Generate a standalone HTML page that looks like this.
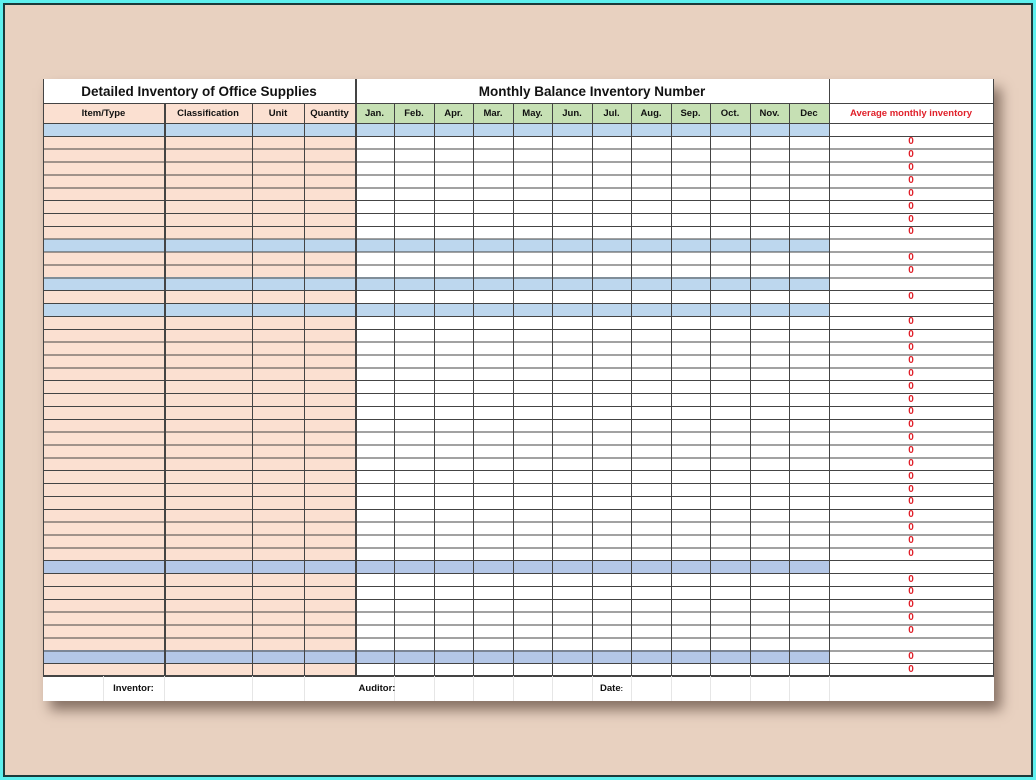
<!DOCTYPE html>
<html><head><meta charset="utf-8"><style>
*{margin:0;padding:0;box-sizing:border-box}
body{width:1036px;height:780px;overflow:hidden;background:#5ef0ee;font-family:"Liberation Sans",Arial,sans-serif}
#frame{position:absolute;left:3px;top:3px;width:1030px;height:774px;background:#e8d1c0;border:2px solid #1b3a3a}
#sheet{position:absolute;left:43px;top:79px;width:951px;height:622px;background:#fff;box-shadow:7px 9px 12px rgba(70,50,40,.6)}
.a{position:absolute}
.v{position:absolute;width:1px;background:#444}
.t{position:absolute;font-weight:bold;text-align:center;color:#111}
.h{font-size:9.5px;top:29px}
</style></head><body>
<div id="frame"></div>
<div id="sheet">
 <div class="t" style="left:0;top:5px;width:312px;font-size:13.5px">Detailed Inventory of Office Supplies</div>
 <div class="t" style="left:312px;top:5px;width:474px;font-size:13.5px">Monthly Balance Inventory Number</div>
 <div class="a" style="left:0;top:24px;width:312px;height:20px;background:#fbe0d1"></div>
 <div class="a" style="left:312px;top:24px;width:474px;height:20px;background:#c6e0b4"></div>
 <div class="a" style="left:0;top:44px;width:312px;height:553px;background:#fbe0d1"></div>
 <div class="a" style="left:0;top:44px;width:786px;height:13px;background:#bdd7ee"></div>
 <div class="a" style="left:0;top:159.7px;width:786px;height:13px;background:#bdd7ee"></div>
 <div class="a" style="left:0;top:198.3px;width:786px;height:13px;background:#bdd7ee"></div>
 <div class="a" style="left:0;top:224px;width:786px;height:13px;background:#bdd7ee"></div>
 <div class="a" style="left:0;top:481.2px;width:786px;height:13px;background:#b4c7e7"></div>
 <div class="a" style="left:0;top:571.3px;width:786px;height:13px;background:#b4c7e7"></div>
 <div class="a" style="left:0;top:24px;width:951px;height:1px;background:#444"></div>
 <div class="a" style="left:0;top:44px;width:951px;height:554px;background:repeating-linear-gradient(to bottom,#444 0,#444 1px,transparent 1px,transparent 12.86px)"></div>
 <div class="a" style="left:0;top:596px;width:951px;height:1px;background:#444"></div>
 <div class="v" style="left:0;top:0;height:597px"></div>
 <div class="v" style="left:121px;top:24px;height:573px;width:2px"></div>
 <div class="v" style="left:209px;top:24px;height:573px"></div>
 <div class="v" style="left:261px;top:24px;height:573px"></div>
 <div class="v" style="left:312px;top:0;height:597px;width:2px"></div>
 <div class="v" style="left:351px;top:24px;height:573px"></div>
 <div class="v" style="left:391px;top:24px;height:573px"></div>
 <div class="v" style="left:430px;top:24px;height:573px"></div>
 <div class="v" style="left:470px;top:24px;height:573px"></div>
 <div class="v" style="left:509px;top:24px;height:573px"></div>
 <div class="v" style="left:549px;top:24px;height:573px"></div>
 <div class="v" style="left:588px;top:24px;height:573px"></div>
 <div class="v" style="left:628px;top:24px;height:573px"></div>
 <div class="v" style="left:667px;top:24px;height:573px"></div>
 <div class="v" style="left:707px;top:24px;height:573px"></div>
 <div class="v" style="left:746px;top:24px;height:573px"></div>
 <div class="v" style="left:786px;top:0;height:597px"></div>
 <div class="v" style="left:950px;top:0;height:597px"></div>
 <div class="v" style="left:60px;top:597px;height:25px;background:#e6e6e6"></div>
 <div class="v" style="left:121px;top:597px;height:25px;background:#e6e6e6"></div>
 <div class="v" style="left:209px;top:597px;height:25px;background:#e6e6e6"></div>
 <div class="v" style="left:261px;top:597px;height:25px;background:#e6e6e6"></div>
 <div class="v" style="left:351px;top:597px;height:25px;background:#e6e6e6"></div>
 <div class="v" style="left:391px;top:597px;height:25px;background:#e6e6e6"></div>
 <div class="v" style="left:430px;top:597px;height:25px;background:#e6e6e6"></div>
 <div class="v" style="left:470px;top:597px;height:25px;background:#e6e6e6"></div>
 <div class="v" style="left:509px;top:597px;height:25px;background:#e6e6e6"></div>
 <div class="v" style="left:549px;top:597px;height:25px;background:#e6e6e6"></div>
 <div class="v" style="left:588px;top:597px;height:25px;background:#e6e6e6"></div>
 <div class="v" style="left:628px;top:597px;height:25px;background:#e6e6e6"></div>
 <div class="v" style="left:667px;top:597px;height:25px;background:#e6e6e6"></div>
 <div class="v" style="left:707px;top:597px;height:25px;background:#e6e6e6"></div>
 <div class="v" style="left:746px;top:597px;height:25px;background:#e6e6e6"></div>
 <div class="v" style="left:786px;top:597px;height:25px;background:#e6e6e6"></div>
 <div class="t h" style="left:0;width:121px">Item/Type</div>
 <div class="t h" style="left:121px;width:88px">Classification</div>
 <div class="t h" style="left:209px;width:52px">Unit</div>
 <div class="t h" style="left:261px;width:51px">Quantity</div>
 <div class="t h" style="left:312px;width:39px">Jan.</div>
 <div class="t h" style="left:351px;width:40px">Feb.</div>
 <div class="t h" style="left:391px;width:39px">Apr.</div>
 <div class="t h" style="left:430px;width:40px">Mar.</div>
 <div class="t h" style="left:470px;width:39px">May.</div>
 <div class="t h" style="left:509px;width:40px">Jun.</div>
 <div class="t h" style="left:549px;width:39px">Jul.</div>
 <div class="t h" style="left:588px;width:40px">Aug.</div>
 <div class="t h" style="left:628px;width:39px">Sep.</div>
 <div class="t h" style="left:667px;width:40px">Oct.</div>
 <div class="t h" style="left:707px;width:39px">Nov.</div>
 <div class="t h" style="left:746px;width:40px">Dec</div>
 <div class="t h" style="left:786px;width:164px;color:#e0202a">Average monthly inventory</div>
 <div class="t" style="left:786px;top:44.5px;width:164px;font-size:10px;line-height:12.86px;color:#e0202a;white-space:pre"> 
0
0
0
0
0
0
0
0
 
0
0
 
0
 
0
0
0
0
0
0
0
0
0
0
0
0
0
0
0
0
0
0
0
 
0
0
0
0
0
 
0
0</div>
 <div class="t" style="left:60px;top:604px;width:61px;font-size:9.5px">Inventor:</div>
 <div class="t" style="left:314px;top:604px;width:40px;font-size:9.5px">Auditor:</div>
 <div class="t" style="left:549px;top:604px;width:39px;font-size:9.5px">Date<span style="font-size:7px">:</span></div>
</div>
</body></html>
